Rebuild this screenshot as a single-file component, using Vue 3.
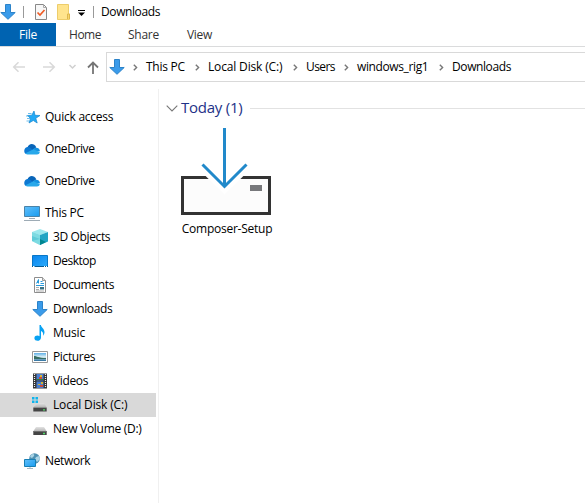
<script setup>
const tree = [
  { label: 'Quick access', icon: 'star', root: true, gap: true, track: -0.25 },
  { label: 'OneDrive', icon: 'cloud', root: true, gap: true, track: -0.42 },
  { label: 'OneDrive', icon: 'cloud', root: true, gap: true, track: -0.42 },
  { label: 'This PC', icon: 'pc', root: true, track: -0.25 },
  { label: '3D Objects', icon: 'cube', track: -0.37 },
  { label: 'Desktop', icon: 'desktop', track: -0.48 },
  { label: 'Documents', icon: 'doc', track: -0.36 },
  { label: 'Downloads', icon: 'down', track: -0.36 },
  { label: 'Music', icon: 'music', track: -0.1 },
  { label: 'Pictures', icon: 'picture', track: -0.36 },
  { label: 'Videos', icon: 'video', track: -0.36 },
  { label: 'Local Disk (C:)', icon: 'diskc', selected: true, track: -0.16 },
  { label: 'New Volume (D:)', icon: 'disk', gap: true, track: -0.29 },
  { label: 'Network', icon: 'network', root: true, track: -0.36 },
]
const crumbs = [
  { label: 'This PC', width: 62, track: -0.25 },
  { label: 'Local Disk (C:)', width: 98, track: -0.16 },
  { label: 'Users', width: 51, track: -0.6 },
  { label: 'windows_rig1', width: 95, track: -0.38 },
  { label: 'Downloads', width: 80, track: -0.4 },
]
</script>

<template>
  <div class="window">
    <svg class="defs" width="0" height="0">
      <defs>
        <linearGradient id="gBlue" x1="0" y1="0" x2="1" y2="1"><stop offset="0" stop-color="#62bffa" /><stop offset="1" stop-color="#189cf0" /></linearGradient>
        <linearGradient id="gDesk" x1="0" y1="0" x2="1" y2="1"><stop offset="0" stop-color="#0a85ee" /><stop offset="1" stop-color="#2cabfb" /></linearGradient>
        <linearGradient id="gDisk" x1="0" y1="0" x2="0" y2="1"><stop offset="0" stop-color="#e3e3e3" /><stop offset="1" stop-color="#b8b8b8" /></linearGradient>
        <linearGradient id="gPic" x1="0" y1="0" x2="0" y2="1"><stop offset="0" stop-color="#5fb0e8" /><stop offset=".5" stop-color="#e0f2f4" /><stop offset="1" stop-color="#23699b" /></linearGradient>
      </defs>
      <symbol id="down" viewBox="0 0 16 16"><path d="M5.500.5h5v8h4.700L8 15.300.8 8.500h4.700z" fill="#3a9bea" stroke="#2c83c9" /></symbol>
      <symbol id="star" viewBox="0 0 16 16"><path d="M10 2l1 4.300 5 .2-4.200 2.800 1.400 4.700L9.300 11.500 5 14l1.500-4.600L3.500 6.500l4.300-.3z" fill="#22a9f5" stroke="#1686cf" stroke-width=".7" /><path d="M4 4.500h3.500M2 7h3M3 9.500h3M2.500 12h2.500" stroke="#4aafe8" stroke-width=".8" /></symbol>
      <symbol id="cloud" viewBox="0 0 16 16"><path d="M3.500 6.500C4.500 2.500 10 1.600 12.300 6.300L8 10z" fill="#0864b8" /><path d="M.3 10.500C0 7 3 5.600 5.300 6.200l5 3.500L2 13C1 12.600.3 11.600.3 10.500z" fill="#0d78d2" /><path d="M9 8.500c1-2.500 6.500-3 7 1.700L10 11z" fill="#1490df" /><path d="M1.400 12.300L9.500 8.300l6.300 3c-.4 1.500-1.300 2.200-2.800 2.200H3.500c-.8 0-1.600-.4-2.100-1.200z" fill="#28a8ea" /></symbol>
      <symbol id="pc" viewBox="0 0 16 16"><path d="M.5 1.500h15v10H.5z" fill="url(#gBlue)" stroke="#4a83a8" /><path d="M5 13.500h6M0 15.500h16" stroke="#9eabb5" /></symbol>
      <symbol id="cube" viewBox="0 0 16 16"><path d="M8 0l8 3-8 3-8-3z" fill="#9ce9ee" /><path d="M0 3l8 3v10l-8-4z" fill="#5fcbd8" /><path d="M8 6l8-3v9.500L8 16z" fill="#21a5c4" /><path d="M0 12l8-2v6zM0 3l8 3v4L0 7z" fill="#8ee3e8" opacity=".65" /><path d="M8 10l6 3-6 3z" fill="#00868f" /></symbol>
      <symbol id="desktop" viewBox="0 0 16 16"><path d="M.5 2.500h15v11H.5z" fill="url(#gDesk)" stroke="#0877c7" /><path d="M0 13.500h16" stroke="#075a91" /><path d="M1 13.500h1.500M12 13.500h1M14 13.500h1" stroke="#fff" /></symbol>
      <symbol id="doc" viewBox="0 0 16 16"><path d="M2.500.5h8l3 3v12h-11z" fill="#fff" stroke="#8d8d8d" /><path d="M10.500.5v3h3" fill="#ddd" stroke="#999" /><path d="M4.500 6.500L6.500 2.500v4M5 5.500h2M8.500 4.500h2M8.500 6.500h3.500M4 8.500h8" fill="none" stroke="#289bdc" /><path d="M4 10.500h3M4 12.500h3M4 14h8" stroke="#999" stroke-width=".8" /><path d="M8 10h4v2.500H8z" fill="#397184" /></symbol>
      <symbol id="music" viewBox="0 0 16 16"><path d="M7.500 0h1.400c.4 3 4.500 4 3.400 8.500-.3 1-.6 1.600-1.300 2.300.6-2.800-.4-4.200-2-4.800v6.500C9 17 2 16.700 2.400 13c.2-2.300 3.200-3 5.100-1.800z" fill="#08a2f3" /></symbol>
      <symbol id="picture" viewBox="0 0 16 16"><path d="M.5 2.500h15v11H.5z" fill="#fff" stroke="#999" /><path d="M2 4h12v8H2z" fill="url(#gPic)" /><path d="M2 7c3 0 4 2 12 2v1H2z" fill="#376e63" /></symbol>
      <symbol id="video" viewBox="0 0 16 16"><path d="M1 .5h14v15H1z" fill="#343434" /><path d="M2.500 1v14M13.500 1v14" stroke="#eee" stroke-width="1.200" stroke-dasharray="1 1" /><path d="M4.500 1h7v6.500h-7zM4.500 8.500h7V15h-7z" fill="#4a7fd0" /><path d="M7 4h3v2H7zM8 12h3v2H8z" fill="#cf4b35" /><path d="M8 2h2v2H8zM6 11h2v1H6zM9 9h2v2H9z" fill="#d7b42f" /><path d="M4.500 6h7v1h-7z" fill="#347a43" /></symbol>
      <symbol id="disk" viewBox="0 0 16 16"><path d="M4 6h8l2.500 4h-13z" fill="url(#gDisk)" /><path d="M1.300 10h13.400v4H1.300z" fill="#454545" /><path d="M1.300 10h13.400v.8H1.300z" fill="#777" /><path d="M11 12.500h2" stroke="#52db69" stroke-width="1.300" /></symbol>
      <symbol id="diskc" viewBox="0 0 16 16"><path d="M4 8l2.500-2H12l2.500 4h-13z" fill="url(#gDisk)" /><path d="M0 0h2.500v2.500H0zM3.500 0H6v2.500H3.500zM0 3.500h2.500V6H0zM3.500 3.500H6V6H3.500z" fill="#10b4ec" /><path d="M1.300 10.500h13.400V14.500H1.300z" fill="#454545" /><path d="M11 12.800h2" stroke="#52db69" stroke-width="1.300" /></symbol>
      <symbol id="network" viewBox="0 0 16 16"><circle cx="10.500" cy="5.500" r="5.300" fill="#4f91b2" /><path d="M7 2c2-2 4-1 3 1L8 5 6 4zM12 4l3-1 1 3-3 3-2-3z" fill="#abd4e5" /><path d="M.5 6.500h11v7H.5z" fill="url(#gBlue)" stroke="#187fb4" /><path d="M3 15.500h6M6 14v1" stroke="#a6b9c3" /></symbol>
    </svg>

    <header class="titlebar">
      <svg class="i16"><use href="#down" /></svg>
      <i class="bar first"></i>
      <svg class="check" width="12" height="16" viewBox="0 0 12 16"><path d="M.5.5h8l3 3v12H.5z" fill="#f7f7f7" stroke="#888" /><path d="M8.500.5v3h3" fill="none" stroke="#aaa" /><path d="M2.500 8.500L5 11l4.500-5" fill="none" stroke="#ef5b24" stroke-width="1.700" /></svg>
      <svg class="folder" width="13" height="16" viewBox="0 0 13 16"><path d="M.5.5h11v9.500h1v5.500H.5z" fill="#ffe48d" stroke="#edcd6b" /><path d="M10.500 15v-5h2v5" fill="#f8d66d" stroke="#ddb74e" /></svg>
      <svg class="drop" width="7" height="6" viewBox="0 0 7 6"><path d="M0 .5h7" stroke="#000" /><path d="M0 2.500h7L3.500 6z" /></svg>
      <i class="bar second"></i>
      <span class="t title">Downloads</span>
    </header>

    <nav class="tabs">
      <span class="tab file t">File</span><span class="tab home t">Home</span><span class="tab share t">Share</span><span class="tab view t">View</span>
    </nav>

    <div class="address-row">
      <svg class="arrows" width="106" height="30" viewBox="0 0 106 30" fill="none">
        <path d="M25 15H14M18.500 10.200L13.700 15l4.800 4.800M43 15h11M49.500 10.200l4.800 4.800-4.800 4.800" stroke="#d9d9d9" stroke-width="1.500" />
        <path d="M69.500 13l3 3 3-3" stroke="#d0d0d0" stroke-width="1.500" />
        <path d="M93 22V11M88 15.500l5-5 5 5" stroke="#757575" stroke-width="1.800" />
      </svg>
      <div class="address">
        <svg class="i16"><use href="#down" /></svg>
        <div v-for="c in crumbs" :key="c.label" class="crumb" :style="{ width: c.width + 'px' }">
          <svg class="chev" width="5" height="7" viewBox="0 0 5 7"><path d="M.8.7l2.800 2.800L.8 6.300" fill="none" stroke="#777" stroke-width="1.400" /></svg>
          <span class="t" :style="{ letterSpacing: c.track + 'px' }">{{ c.label }}</span>
        </div>
      </div>
    </div>

    <div class="body">
      <aside class="tree">
        <div v-for="(n, i) in tree" :key="i" class="node" :class="{ root: n.root, gap: n.gap, selected: n.selected }">
          <svg class="i16"><use :href="'#' + n.icon" /></svg>
          <span class="t" :style="{ letterSpacing: n.track + 'px' }">{{ n.label }}</span>
        </div>
      </aside>
      <main class="content">
        <div class="group">
          <svg width="12" height="7" viewBox="0 0 12 7"><path d="M.7.7L6 6 11.300.7" fill="none" stroke="#777" stroke-width="1.100" /></svg>
          <span class="group-name">Today (1)</span>
          <i class="rule"></i>
        </div>
        <div class="tile">
          <svg width="92" height="90" viewBox="0 0 92 90">
            <path d="M2.500 50.500h87v36h-87z" fill="#fcfcfc" stroke="#333" stroke-width="3" />
            <path d="M20 43.500l24.500 24L69 43.500z" fill="#fff" />
            <path d="M70 58h12v6H70z" fill="#77787b" />
            <path d="M44.500 1v58M22.500 37.500l22 22 22-22" fill="none" stroke="#2189ca" stroke-width="3" />
          </svg>
          <span class="t">Composer-Setup</span>
        </div>
      </main>
    </div>
  </div>
</template>

<style>
body { margin: 0; background: #fff; overflow: hidden; }
</style>
<style scoped>
.window { width: 585px; height: 503px; overflow: hidden; background: #fff; font-family: "Open Sans", "Noto Sans", sans-serif; font-size: 12px; color: #000; }
.defs { position: absolute; }
svg { display: block; flex: none; }
.t { white-space: nowrap; line-height: 16px; letter-spacing: -0.25px; }
.i16 { width: 16px; height: 16px; }
.titlebar { height: 23px; display: flex; align-items: center; }
.bar { width: 1px; height: 12px; background: #999; flex: none; }
.first { margin-left: 7px; }
.check { margin-left: 11px; }
.folder { margin-left: 10px; }
.drop { margin: 3px 0 0 8px; }
.second { margin-left: 8px; }
.title { margin-left: 7px; letter-spacing: -0.4px; }
.tabs { height: 23px; display: flex; border-bottom: 1px solid #dadbdc; }
.tab { line-height: 23px; text-align: center; color: #333; width: 57px; }
.tab.file { width: 56px; background: #0063b1; color: #fff; }
.tab.home { width: 58px; letter-spacing: -0.5px; }
.tab.share { margin-left: 1px; }
.tab.view { width: 55px; }
.address-row { display: flex; padding-top: 5px; height: 30px; }
.address { flex: 1; box-sizing: border-box; height: 30px; border: 1px solid #d9d9d9; border-right: 0; display: flex; align-items: center; padding-left: 2px; }
.crumb { display: flex; align-items: center; flex: none; }
.chev { margin: 0 8px; }
.body { display: flex; padding-top: 7px; height: 414px; }
.tree { width: 158px; box-sizing: border-box; padding-top: 16px; }
.node { height: 24px; width: 156px; box-sizing: border-box; display: flex; align-items: center; gap: 5px; padding-left: 32px; }
.node.root { padding-left: 24px; }
.node.gap { margin-bottom: 8px; }
.node.selected { background: #d9d9d9; }
.content { flex: 1; border-left: 1px solid #f0f0f0; padding-top: 8px; }
.group { display: flex; align-items: center; height: 22px; padding-left: 7px; }
.group-name { font-size: 15px; letter-spacing: -0.25px; line-height: 20px; height: 22px; margin-left: 3px; color: #1e3287; white-space: nowrap; }
.rule { height: 1px; flex: 1; background: #e2e2e2; margin-left: 8px; }
.tile { width: 92px; margin: 8px 0 0 21px; display: flex; flex-direction: column; align-items: center; }
.tile .t { margin: 4px 0 0 2px; }
</style>
